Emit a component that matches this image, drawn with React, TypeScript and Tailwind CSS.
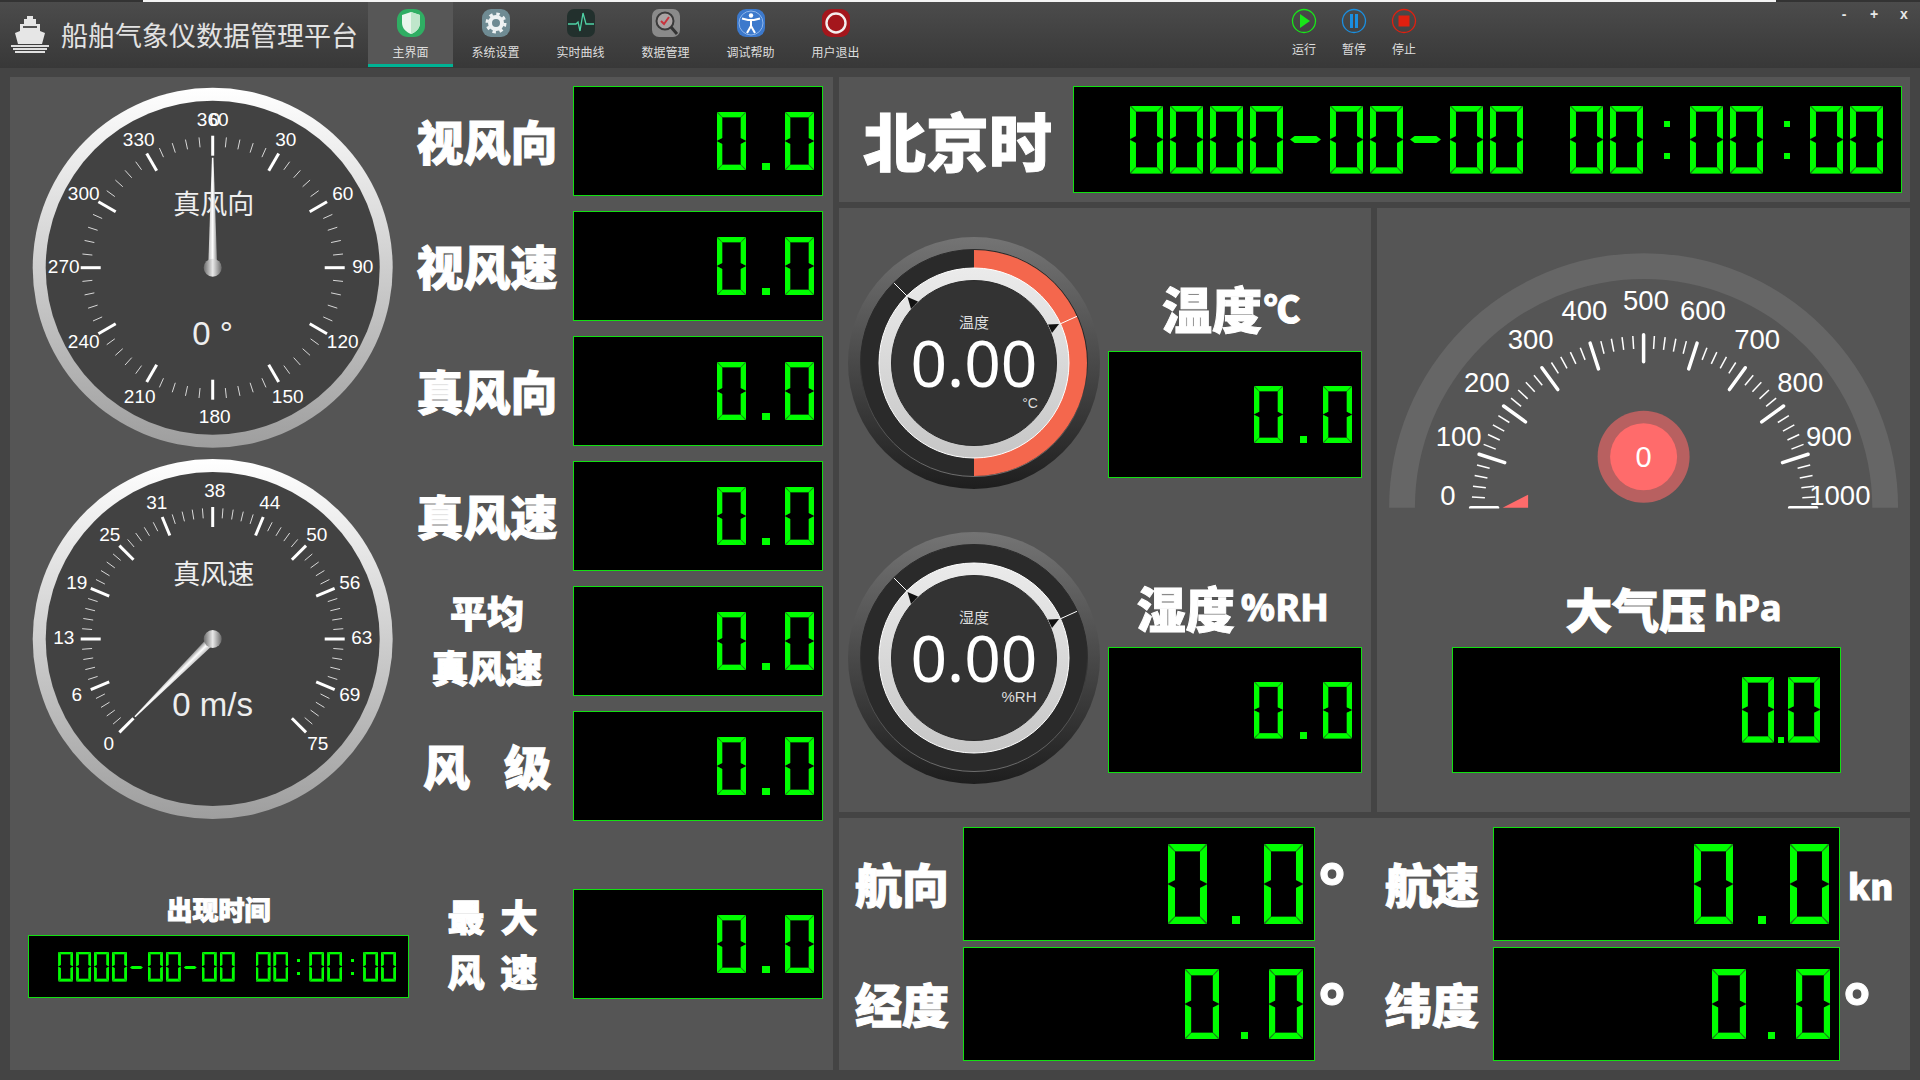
import React from "react";

const cjk = "font-['Noto_Sans_CJK_SC','Noto_Sans',sans-serif]";
const heavy = "font-['Noto_Sans_CJK_SC',sans-serif] font-black text-white leading-none whitespace-nowrap [-webkit-text-stroke:1px_white]";

function Digit({ size }: { size: string }) {
  return (
    <div className={`relative shrink-0 ${size}`}>
      <div className="absolute inset-0 bg-[#1b7a1b] [clip-path:polygon(0_0,100%_0,100%_100%,0_100%,0_0,18%_9%,18%_45%,0_50%,18%_55%,18%_91%,82%_91%,82%_55%,100%_50%,82%_45%,82%_9%,18%_9%,0_0)]" />
      <div className="absolute inset-0 bg-[#00ff00] [clip-path:polygon(3%_0,97%_0,81%_9%,19%_9%)]" />
      <div className="absolute inset-0 bg-[#00ff00] [clip-path:polygon(3%_100%,97%_100%,81%_91%,19%_91%)]" />
      <div className="absolute inset-0 bg-[#00ff00] [clip-path:polygon(0_1.5%,18%_10%,18%_45%,0_49%)]" />
      <div className="absolute inset-0 bg-[#00ff00] [clip-path:polygon(0_51%,18%_55%,18%_90%,0_98.5%)]" />
      <div className="absolute inset-0 bg-[#00ff00] [clip-path:polygon(100%_1.5%,82%_10%,82%_45%,100%_49%)]" />
      <div className="absolute inset-0 bg-[#00ff00] [clip-path:polygon(100%_51%,82%_55%,82%_90%,100%_98.5%)]" />
    </div>
  );
}

function Value({ box, digit, gap, dot, pr }: { box: string; digit: string; gap: string; dot: string; pr: string }) {
  return (
    <div className={`relative flex items-center justify-end bg-black border border-[#12e012] ${box} ${pr}`}>
      <div className="flex items-end" aria-hidden="true">
        <Digit size={digit} />
        <div className={`flex justify-center items-end ${gap}`}>
          <div className={`bg-[#00ff00] ${dot}`} />
        </div>
        <Digit size={digit} />
      </div>
      <span className="absolute inset-0 flex items-center justify-end pr-[12px] text-[40px] leading-none text-transparent font-['Liberation_Mono',monospace]">0.0</span>
    </div>
  );
}

function Clock({ digit, cell, dash, colon, box, pr, rowGap, textSize }: { digit: string; cell: string; dash: string; colon: string; box: string; pr: string; rowGap: string; textSize: string }) {
  const s = "0000-00-00 00:00:00";
  return (
    <div className={`relative flex items-center justify-end bg-black border border-[#12e012] ${box} ${pr}`}>
      <div className="flex" aria-hidden="true">
        {s.split("").map((c, i) => (
          <div key={i} className={`flex items-center shrink-0 ${cell}`}>
            {c === "0" && <Digit size={digit} />}
            {c === "-" && <div className={`bg-[#00ff00] [clip-path:polygon(0_50%,15%_0,85%_0,100%_50%,85%_100%,15%_100%)] ${dash}`} />}
            {c === ":" && (
              <div className={`flex flex-col items-center justify-center ${digit} ${rowGap}`}>
                <div className={`bg-[#00ff00] ${colon}`} />
                <div className={`bg-[#00ff00] ${colon}`} />
              </div>
            )}
          </div>
        ))}
      </div>
      <span className={`absolute inset-0 flex items-center justify-end pr-[12px] leading-none whitespace-pre text-transparent font-['Liberation_Mono',monospace] ${textSize}`}>{s}</span>
    </div>
  );
}

const rowValue = { box: "w-[250px] h-[110px]", digit: "w-[29px] h-[58px]", gap: "w-[39px]", dot: "w-[8px] h-[7px]", pr: "pr-[8px]" };

function pol(cx: number, cy: number, r: number, deg: number) {
  const a = (deg * Math.PI) / 180;
  return [cx + r * Math.sin(a), cy - r * Math.cos(a)];
}

function Tick({ cx, cy, r1, r2, deg, w, color = "#fff", cap = "butt" }: { cx: number; cy: number; r1: number; r2: number; deg: number; w: number; color?: string; cap?: "butt" | "round" }) {
  const [x1, y1] = pol(cx, cy, r1, deg);
  const [x2, y2] = pol(cx, cy, r2, deg);
  return <line x1={x1} y1={y1} x2={x2} y2={y2} stroke={color} strokeWidth={w} strokeLinecap={cap} />;
}

const lat = "font-['Liberation_Sans',sans-serif]";

function Dial({ id, h, cy, title, titleY, value, valueY, start, sweep, majors, subs, labels, needle }: { id: string; h: number; cy: number; title: string; titleY: number; value: string; valueY: number; start: number; sweep: number; majors: number; subs: number; labels: [string, number, number][]; needle: number }) {
  const cx = 202.7;
  const ticks: React.ReactNode[] = [];
  const total = majors * subs;
  const full = sweep === 360;
  for (let i = 0; i <= total; i++) {
    if (full && i === total) continue;
    const d = start + (sweep * i) / total;
    if (i % subs === 0) ticks.push(<Tick key={i} cx={cx} cy={cy} r1={112} r2={132} deg={d} w={3} />);
    else ticks.push(<Tick key={i} cx={cx} cy={cy} r1={121} r2={131} deg={d} w={1} color="#d8d8d8" />);
  }
  return (
    <svg width={408} height={h} className="block shrink-0">
      <defs>
        <linearGradient id={`${id}r`} x1="0" y1="0" x2="0" y2="1">
          <stop offset="0" stopColor="#ffffff" />
          <stop offset="1" stopColor="#9e9e9e" />
        </linearGradient>
        <linearGradient id={`${id}h`} x1="0" y1="0" x2="1" y2="0">
          <stop offset="0" stopColor="#6a6a6a" />
          <stop offset="0.5" stopColor="#e8e8e8" />
          <stop offset="1" stopColor="#6a6a6a" />
        </linearGradient>
        <linearGradient id={`${id}n`} x1="0" y1="0" x2="1" y2="0">
          <stop offset="0" stopColor="#bdbdbd" />
          <stop offset="0.5" stopColor="#ffffff" />
          <stop offset="1" stopColor="#8a8a8a" />
        </linearGradient>
      </defs>
      <circle cx={cx} cy={cy} r={180} fill={`url(#${id}r)`} />
      <circle cx={cx} cy={cy} r={167} fill="#424242" />
      {ticks}
      {labels.map(([t, x, y], i) => (
        <text key={i} x={cx + x} y={cy + y} textAnchor="middle" dominantBaseline="central" fill="#fff" fontSize={19} className={lat}>{t}</text>
      ))}
      <text x={cx + 1} y={cy + titleY} textAnchor="middle" dominantBaseline="central" fill="#eee" fontSize={27} className={cjk}>{title}</text>
      <text x={cx} y={cy + valueY} textAnchor="middle" dominantBaseline="central" fill="#eee" fontSize={33} className={lat}>{value}</text>
      <g transform={`rotate(${needle} ${cx} ${cy})`}>
        <polygon points={`${cx - 4.5},${cy} ${cx + 4.5},${cy} ${cx + 0.8},${cy - 110} ${cx - 0.8},${cy - 110}`} fill={`url(#${id}n)`} />
      </g>
      <circle cx={cx} cy={cy} r={9} fill={`url(#${id}h)`} />
    </svg>
  );
}

function Ring({ id, h, cy, red, title, unit, ux, uy, us }: { id: string; h: number; cy: number; red: boolean; title: string; unit: string; ux: number; uy: number; us: number }) {
  const cx = 135;
  const tri1 = [[-66.5, -66], [-56, -61.5], [-63, -54]];
  const tri2 = [[74, -38.5], [85, -39], [78, -30]];
  const p = (a: number[][]) => a.map((q) => `${cx + q[0]},${cy + q[1]}`).join(" ");
  const [a1, b1] = pol(cx, cy, 113, -45);
  const [a2, b2] = pol(cx, cy, 95, -45);
  const [c1, d1] = pol(cx, cy, 113, 65.6);
  const [c2, d2] = pol(cx, cy, 95, 65.6);
  return (
    <svg width={269} height={h} className="block shrink-0">
      <defs>
        <linearGradient id={`${id}o`} x1="0" y1="0" x2="0" y2="1">
          <stop offset="0" stopColor="#747474" />
          <stop offset="1" stopColor="#1e1e1e" />
        </linearGradient>
        <linearGradient id={`${id}s`} x1="0" y1="0" x2="0" y2="1">
          <stop offset="0" stopColor="#ebebeb" />
          <stop offset="1" stopColor="#c6c6c6" />
        </linearGradient>
        <linearGradient id={`${id}l`} x1="0" y1="0" x2="0" y2="1">
          <stop offset="0.45" stopColor="#2a2a2a" />
          <stop offset="1" stopColor="#6e6e6e" />
        </linearGradient>
      </defs>
      <circle cx={cx} cy={cy} r={126} fill={`url(#${id}o)`} />
      <circle cx={cx} cy={cy} r={113.5} fill="#2a2a2a" stroke={`url(#${id}l)`} strokeWidth={1} />
      {red && <path d={`M${cx} ${cy - 113}A113 113 0 0 1 ${cx} ${cy + 113}Z`} fill="#f4674d" />}
      <circle cx={cx} cy={cy} r={95} fill={`url(#${id}s)`} stroke="#fff" strokeWidth={1} />
      <circle cx={cx} cy={cy} r={82.5} fill="#333333" stroke="#2a2a2a" strokeWidth={1} />
      <line x1={a1} y1={b1} x2={a2} y2={b2} stroke="#fff" strokeWidth={1} />
      <line x1={c1} y1={d1} x2={c2} y2={d2} stroke="#fff" strokeWidth={1} />
      <polygon points={p(tri1)} fill="#111" />
      <polygon points={p(tri2)} fill="#111" />
      <text x={cx} y={cy - 42} textAnchor="middle" dominantBaseline="central" fill="#ddd" fontSize={15} className={cjk}>{title}</text>
      <text x={cx} y={cy - 1} textAnchor="middle" dominantBaseline="central" fill="#fff" fontSize={64} className="font-['Noto_Sans',sans-serif]">0.00</text>
      <text x={cx + ux} y={cy + uy} textAnchor="middle" dominantBaseline="central" fill="#ddd" fontSize={us} className={lat}>{unit}</text>
    </svg>
  );
}

function Pressure() {
  const cx = 266.6;
  const cy = 299.7;
  const labels: [string, number, number][] = [["0", 197, 765], ["100", 228, 590], ["200", 310, 428], ["300", 437, 297], ["400", 593, 210], ["500", 772, 180], ["600", 937, 210], ["700", 1095, 297], ["800", 1220, 428], ["900", 1303, 590], ["1000", 1335, 765]];
  const ticks: React.ReactNode[] = [];
  for (let i = 0; i <= 50; i++) {
    const d = -90 + 3.6 * i;
    if (i % 5 === 0) ticks.push(<Tick key={i} cx={cx} cy={cy} r1={146} r2={173} deg={d} w={3.5} cap="round" />);
    else ticks.push(<Tick key={i} cx={cx} cy={cy} r1={159} r2={172} deg={d} w={1.5} />);
  }
  return (
    <svg width={533} height={322} className="block shrink-0">
      <defs>
        <clipPath id="pclip">
          <rect x="0" y="0" width="533" height="300.5" />
        </clipPath>
      </defs>
      <path d={`M${cx - 254.5} ${cy}A254.5 254.5 0 0 1 ${cx + 254.5} ${cy}L${cx + 228.7} ${cy}A228.7 228.7 0 0 0 ${cx - 228.7} ${cy}Z`} fill="#666666" />
      <g clipPath="url(#pclip)">{ticks}</g>
      {labels.map(([t, x, y]) => (
        <text key={t} x={cx + (x - 765) / 2.904} y={248.7 + (y - 650) / 3} textAnchor="middle" dominantBaseline="central" fill="#fff" fontSize={27.5} className={lat}>{t}</text>
      ))}
      <polygon points={`${cx - 141},${cy} ${cx - 115.5},${cy} ${cx - 115.5},${cy - 13}`} fill="#ff6b6b" />
      <circle cx={cx} cy={248.7} r={46} fill="#b86060" />
      <circle cx={cx} cy={248.7} r={33.5} fill="#ff6b6b" />
      <text x={cx} y={248.7} textAnchor="middle" dominantBaseline="central" fill="#fff" fontSize={29} className={lat}>0</text>
    </svg>
  );
}

function IconBox({ children }: { children: React.ReactNode }) {
  return <svg width={30} height={30} viewBox="0 0 30 30" className="block">{children}</svg>;
}

function Tab({ label, active, children }: { label: string; active?: boolean; children: React.ReactNode }) {
  return (
    <div className={`w-[85px] h-[65px] flex flex-col items-center pt-[6px] box-border ${active ? "bg-[#575757] border-b-[3px] border-[#00b294]" : ""}`}>
      {children}
      <div className="mt-[6px] text-[12px] leading-[16px] text-[#dedede]">{label}</div>
    </div>
  );
}

function Ctrl({ label, children }: { label: string; children: React.ReactNode }) {
  return (
    <div className="w-[50px] flex flex-col items-center pt-[6px]">
      <svg width={26} height={26} viewBox="0 0 26 26" className="block">{children}</svg>
      <div className="mt-[6px] text-[12px] leading-[18px] text-[#dedede]">{label}</div>
    </div>
  );
}

function Header() {
  return (
    <div className="h-[68px] shrink-0 flex flex-col bg-gradient-to-b from-[#4c4c4c] to-[#383838]">
      <div className="h-[3px] flex bg-[#333333]">
        <div className="w-[143px]" />
        <div className="w-[1633px] bg-[#f4f4f4]" />
      </div>
      <div className="flex flex-1">
        <svg width={40} height={38} viewBox="0 0 40 38" className="ml-[10px] mt-[13px] shrink-0">
          <path d="M17 1h6v3h3v5h4v7l5 2-3 11H8L5 18l5-2V9h4V4h3z" fill="#e6e6e6" />
          <path d="M1 30h38v2H1zM3 33h34v2H3zM5 36h30v2H5z" fill="#e0e0e0" />
          <path d="M13 11h14v2H13z" fill="#555" />
        </svg>
        <div className="ml-[11px] w-[307px] text-[27px] leading-[66px] text-[#e2e2e2] whitespace-nowrap">船舶气象仪数据管理平台</div>
        <Tab label="主界面" active>
          <IconBox>
            <rect x="1" y="1" width="28" height="28" rx="11" fill="#2fae63" />
            <path d="M15 4l9 3v8c0 5-4 9-9 11-5-2-9-6-9-11V7z" fill="#e9f6ec" />
            <path d="M15 4l9 3v8c0 5-4 9-9 11z" fill="#bfe6cb" />
          </IconBox>
        </Tab>
        <Tab label="系统设置">
          <IconBox>
            <rect x="1" y="1" width="28" height="28" rx="9" fill="#6f8b93" />
            <circle cx="15" cy="15" r="6" fill="none" stroke="#eef2f3" strokeWidth="4" />
            <circle cx="15" cy="15" r="9" fill="none" stroke="#eef2f3" strokeWidth="3" strokeDasharray="3.4 3.67" />
          </IconBox>
        </Tab>
        <Tab label="实时曲线">
          <IconBox>
            <rect x="1" y="1" width="28" height="28" rx="7" fill="#22302d" />
            <path d="M2 16h8l2-2 2 9 3-18 3 11h8" fill="none" stroke="#4fd1a5" strokeWidth="1.3" />
          </IconBox>
        </Tab>
        <Tab label="数据管理">
          <IconBox>
            <rect x="1" y="1" width="28" height="28" rx="7" fill="#8a8a8a" />
            <circle cx="14" cy="13" r="8.5" fill="#a9a3a3" stroke="#3a3a3a" strokeWidth="2" />
            <path d="M10 13l3 3 5-7" fill="none" stroke="#c8323c" strokeWidth="2" />
            <path d="M20 19l6 7" stroke="#333" strokeWidth="3" />
          </IconBox>
        </Tab>
        <Tab label="调试帮助">
          <IconBox>
            <rect x="1" y="1" width="28" height="28" rx="9" fill="#3c79cc" />
            <circle cx="15" cy="15" r="12" fill="none" stroke="#8fb6ea" strokeWidth="1" />
            <circle cx="15" cy="7.5" r="2.2" fill="#fff" />
            <path d="M6 10.5l6 1.5h6l6-1.5M15 12v6M15 18l-4 7M15 18l4 7" fill="none" stroke="#fff" strokeWidth="2" />
          </IconBox>
        </Tab>
        <Tab label="用户退出">
          <IconBox>
            <rect x="1" y="1" width="28" height="28" rx="9" fill="#a4161c" />
            <circle cx="15" cy="15" r="9.5" fill="none" stroke="#f4eeee" strokeWidth="2.4" />
          </IconBox>
        </Tab>
        <div className="w-[401px]" />
        <Ctrl label="运行">
          <circle cx="13" cy="13" r="11.5" fill="none" stroke="#19e619" strokeWidth="1.3" />
          <path d="M9 6l10 7-10 7z" fill="#19e619" />
        </Ctrl>
        <Ctrl label="暂停">
          <circle cx="13" cy="13" r="11.5" fill="none" stroke="#1a8fe0" strokeWidth="1.3" />
          <path d="M9 6h3v14H9zM14 6h3v14h-3z" fill="#1a8fe0" />
        </Ctrl>
        <Ctrl label="停止">
          <circle cx="13" cy="13" r="11.5" fill="none" stroke="#e0200f" strokeWidth="1.3" />
          <path d="M7.5 7.5h11v11h-11z" fill="#e0200f" />
        </Ctrl>
        <div className="ml-auto flex pr-[1px] text-[14px] font-bold leading-[24px] text-[#e8e8e8] font-['Liberation_Sans',sans-serif]">
          <span className="w-[30px] text-center">-</span>
          <span className="w-[30px] text-center">+</span>
          <span className="w-[30px] text-center">x</span>
        </div>
      </div>
    </div>
  );
}

const dial1: [string, number, number][] = [
  ["30", 73, -128], ["60", 130, -74], ["90", 150, -1], ["120", 130, 74], ["150", 75, 129], ["180", 2, 149], ["210", -73, 129], ["240", -129, 74], ["270", -149, -1], ["300", -129, -74], ["330", -74, -128], ["360", 0, -148], ["0", 2, -148],
];
const dial2: [string, number, number][] = [
  ["0", -104, 104], ["6", -136, 55], ["13", -149, -2], ["19", -136, -57], ["25", -103, -105], ["31", -56, -137], ["38", 2, -149], ["44", 57, -137], ["50", 104, -105], ["56", 137, -57], ["63", 149, -2], ["69", 137, 55], ["75", 105, 104],
];

function LeftPanel() {
  const rows: React.ReactNode[] = [
    <div className={`text-[47px] pb-[3px] ${heavy}`}>视风向</div>,
    <div className={`text-[47px] pb-[3px] ${heavy}`}>视风速</div>,
    <div className={`text-[47px] pb-[3px] ${heavy}`}>真风向</div>,
    <div className={`text-[47px] pb-[3px] ${heavy}`}>真风速</div>,
    <div className={`text-[37px] text-center flex flex-col gap-[18px] pb-[2px] ${heavy}`}><span>平均</span><span>真风速</span></div>,
    <div className={`text-[47px] flex gap-[34px] pb-[3px] ${heavy}`}><span>风</span><span>级</span></div>,
  ];
  return (
    <div className="w-[823px] h-[993px] bg-[#555555] flex shrink-0">
      <div className="w-[408px] shrink-0 flex flex-col">
        <Dial id="a" h={380} cy={190.7} title="真风向" titleY={-65} value="0 °" valueY={66} start={0} sweep={360} majors={12} subs={5} labels={dial1} needle={0} />
        <Dial id="b" h={372} cy={182} title="真风速" titleY={-67} value="0 m/s" valueY={65} start={-135} sweep={270} majors={12} subs={5} labels={dial2} needle={-135} />
        <div className={`mt-[67px] ml-[18px] w-[381px] text-center text-[26px] ${heavy} [-webkit-text-stroke:0.5px_white]`}>出现时间</div>
        <div className="mt-[13px] ml-[18px]">
          <Clock box="w-[381px] h-[63px]" pr="pr-[9px]" digit="w-[15px] h-[30px]" cell="w-[17.95px]" dash="w-[13px] h-[3px] mt-[2px]" colon="w-[3px] h-[3px]" rowGap="gap-[10px]" textSize="text-[28px]" />
        </div>
      </div>
      <div className="flex flex-col pt-[9px] gap-[15px]">
        {rows.map((label, i) => (
          <div key={i} className="flex items-center h-[110px]">
            <div className="w-[155px] pr-[17px] flex justify-center">{label}</div>
            <Value {...rowValue} />
          </div>
        ))}
        <div className="flex items-center h-[110px] mt-[53px]">
          <div className={`w-[155px] pr-[6px] flex flex-col items-center gap-[18px] text-[37px] ${heavy}`}>
            <div className="flex gap-[16px]"><span>最</span><span>大</span></div>
            <div className="flex gap-[16px]"><span>风</span><span>速</span></div>
          </div>
          <Value {...rowValue} />
        </div>
      </div>
    </div>
  );
}

function Bottom() {
  const label = `text-[47px] pb-[3px] ${heavy}`;
  const big = { box: "w-full h-[114px]", digit: "w-[39px] h-[80px]", gap: "w-[57px]", dot: "w-[8px] h-[8px]", pr: "pr-[11px]" };
  const small = { box: "w-full h-[114px]", digit: "w-[34px] h-[70px]", gap: "w-[50px]", dot: "w-[7px] h-[7px]", pr: "pr-[11px]" };
  const deg = `text-[66px] h-[66px] pl-[3px] mt-[4px] ${heavy}`;
  return (
    <div className="h-[252px] bg-[#555555] grid grid-cols-[124px_352px_70px_108px_347px_1fr] grid-rows-[114px_114px] gap-y-[6px] pt-[9px] items-center">
      <div className={`pl-[16px] ${label}`}>航向</div>
      <Value {...big} />
      <div className="flex items-center"><span className={deg}>°</span></div>
      <div className={label}>航速</div>
      <Value {...big} pr="pr-[10px]" />
      <div className={`pl-[8px] text-[35px] ${heavy}`}>kn</div>
      <div className={`pl-[16px] ${label}`}>经度</div>
      <Value {...small} />
      <div className="flex items-center"><span className={deg}>°</span></div>
      <div className={label}>纬度</div>
      <Value {...small} pr="pr-[9px]" />
      <div className="flex items-center"><span className={deg}>°</span></div>
    </div>
  );
}

export default function App() {
  return (
    <div className={`w-[1920px] h-[1080px] bg-[#444444] flex flex-col overflow-hidden ${cjk}`}>
      <Header />
      <div className="flex pl-[10px] pt-[9px] gap-[6px]">
        <LeftPanel />
        <div className="w-[1071px] flex flex-col gap-[6px]">
          <div className="h-[125px] bg-[#555555] flex items-center pr-[8px]">
            <div className={`w-[234px] pl-[24px] pb-[2px] text-[63px] ${heavy}`}>北京时</div>
            <Clock box="w-[829px] h-[107px]" pr="pr-[11px]" digit="w-[33px] h-[68px]" cell="w-[40px]" dash="w-[31px] h-[7px]" colon="w-[6px] h-[6px]" rowGap="gap-[26px]" textSize="text-[60px]" />
          </div>
          <div className="h-[604px] flex gap-[6px]">
            <div className="w-[532px] bg-[#555555] flex flex-col">
              <div className="flex h-[297px]">
                <Ring id="t" h={297} cy={155} red title="温度" unit="°C" ux={56} uy={40} us={14} />
                <div className="flex flex-col items-center">
                  <div className={`mt-[69px] h-[60px] pr-[8px] flex items-center text-[50px] ${heavy}`}>温度<span className="ml-[2px] text-[36px]">℃</span></div>
                  <div className="mt-[14px]">
                    <Value box="w-[254px] h-[127px]" digit="w-[29px] h-[57px]" gap="w-[40px]" dot="w-[7px] h-[7px]" pr="pr-[9px]" />
                  </div>
                </div>
              </div>
              <div className="flex h-[306px]">
                <Ring id="h" h={306} cy={153} red={false} title="湿度" unit="%RH" ux={45} uy={38} us={15} />
                <div className="flex flex-col items-center">
                  <div className={`mt-[71px] h-[60px] pr-[4px] flex items-center text-[49px] ${heavy}`}>湿度<span className="ml-[6px] text-[38px] font-['Noto_Sans',sans-serif] font-bold">%RH</span></div>
                  <div className="mt-[11px]">
                    <Value box="w-[254px] h-[126px]" digit="w-[29px] h-[57px]" gap="w-[40px]" dot="w-[7px] h-[7px]" pr="pr-[9px]" />
                  </div>
                </div>
              </div>
            </div>
            <div className="w-[533px] bg-[#555555] flex flex-col">
              <Pressure />
              <div className={`mt-[47.5px] h-[60px] flex items-center justify-center pl-[60px] text-[47px] ${heavy}`}>大气压<span className="ml-[8px] text-[36px] font-['Noto_Sans',sans-serif] font-bold">hPa</span></div>
              <div className="mt-[9px] ml-[75px]">
                <Value box="w-[389px] h-[126px]" digit="w-[32px] h-[66px]" gap="w-[14px]" dot="w-[6px] h-[6px]" pr="pr-[20px]" />
              </div>
            </div>
          </div>
          <Bottom />
        </div>
      </div>
    </div>
  );
}
